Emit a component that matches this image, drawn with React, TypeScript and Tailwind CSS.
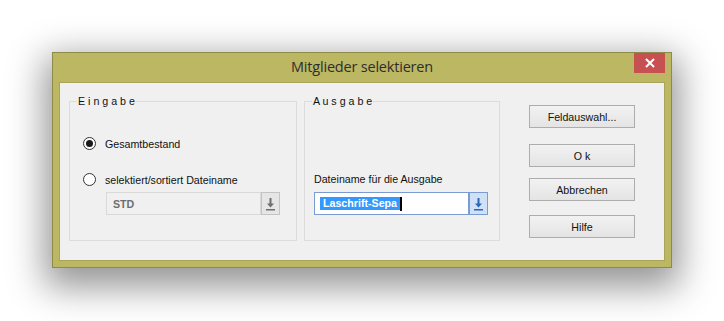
import React from "react";

function ArrowIcon({ color }: { color: string }) {
  return (
    <svg width="9" height="14" viewBox="0 0 9 14">
      <rect x="3.5" y="1" width="2" height="6" fill={color} />
      <polygon points="1,6.5 8,6.5 4.5,10.5" fill={color} />
      <rect x="0" y="12" width="9" height="1.5" fill={color} />
    </svg>
  );
}

function Radio({ checked }: { checked?: boolean }) {
  return (
    <span className="w-[13px] h-[13px] rounded-full border border-[#333333] bg-white flex items-center justify-center shrink-0">
      {checked && <span className="w-[7px] h-[7px] rounded-full bg-[#1a1a1a]" />}
    </span>
  );
}

function Btn({ children, className }: { children: React.ReactNode; className?: string }) {
  return (
    <div
      className={
        "w-[106px] h-[23px] border border-[#adadad] bg-gradient-to-b from-[#f2f2f2] to-[#e4e4e4] flex items-center justify-center text-[#111] " +
        (className ?? "")
      }
    >
      {children}
    </div>
  );
}

export default function App() {
  return (
    <div className="w-[724px] h-[321px] bg-white pt-[52px] pl-[52px] font-['Arial','Liberation_Sans',sans-serif] text-[10.67px] overflow-hidden">
      <div className="w-[620px] h-[216px] bg-[#bcb763] border border-[#8e8a47] shadow-[0_12px_34px_7px_rgba(0,0,0,0.42)] flex flex-col">
        <div className="h-[29px] relative flex items-center justify-center">
          <span className="font-['Open_Sans','Noto_Sans',sans-serif] text-[14.5px] text-[#2e2e2e] tracking-[-0.2px] mt-[-1px]">
            Mitglieder selektieren
          </span>
          <div className="absolute right-[6px] top-0 w-[31px] h-[20px] bg-[#c75050] flex items-center justify-center">
            <svg width="10" height="10" viewBox="0 0 10 10">
              <path d="M1 1 L9 9 M9 1 L1 9" stroke="white" strokeWidth="2" />
            </svg>
          </div>
        </div>
        <div className="ml-[6px] w-[606px] h-[179px] bg-[#f0f0f0] border border-[#a9a45a] flex items-start pl-[9px] pt-[18px]">
          {/* Eingabe */}
          <div className="relative w-[228px] h-[140px] border border-[#dcdcdc] flex flex-col pl-[13px] pt-[35px]">
            <span className="absolute top-[-7px] left-[7px] px-[1px] bg-[#f0f0f0] leading-[12px] text-[#111]">
              E i n g a b e
            </span>
            <div className="flex items-center h-[13px]">
              <Radio checked />
              <span className="ml-[9px] text-[#111]">Gesamtbestand</span>
            </div>
            <div className="flex items-center h-[13px] mt-[23px]">
              <Radio />
              <span className="ml-[9px] text-[#111]">selektiert/sortiert Dateiname</span>
            </div>
            <div className="flex mt-[6px] ml-[23px] h-[23px]">
              <div className="w-[155px] h-[23px] border border-[#d9d9d9] bg-[#f0f0f0] flex items-center pl-[6px] font-bold text-[#6d6d6d]">
                STD
              </div>
              <div className="w-[19px] h-[23px] border border-[#c4c4c4] bg-[#e6e6e6] flex items-center justify-center">
                <ArrowIcon color="#6e6e6e" />
              </div>
            </div>
          </div>
          {/* Ausgabe */}
          <div className="relative ml-[7px] w-[196px] h-[140px] border border-[#dcdcdc] flex flex-col pl-[9px] pt-[71px]">
            <span className="absolute top-[-7px] left-[7px] px-[1px] bg-[#f0f0f0] leading-[12px] text-[#111]">
              A u s g a b e
            </span>
            <div className="h-[13px] leading-[13px] text-[#111]">Dateiname für die Ausgabe</div>
            <div className="flex mt-[6px] h-[23px]">
              <div className="w-[155px] h-[23px] border border-[#7a9cd3] bg-white flex items-center pl-[5px]">
                <span className="bg-[#3399ff] text-white font-bold leading-[13px] h-[13px] px-[3px]">
                  Laschrift-Sepa
                </span>
                <span className="w-[2px] h-[14px] bg-black" />
              </div>
              <div className="w-[19px] h-[23px] border border-[#7a9cd3] bg-[#cfe0f7] flex items-center justify-center">
                <ArrowIcon color="#2a66b3" />
              </div>
            </div>
          </div>
          {/* Buttons */}
          <div className="ml-[29px] mt-[4px] flex flex-col">
            <Btn>Feldauswahl...</Btn>
            <Btn className="mt-[16px]">O k</Btn>
            <Btn className="mt-[11px]">Abbrechen</Btn>
            <Btn className="mt-[14px]">Hilfe</Btn>
          </div>
        </div>
      </div>
    </div>
  );
}
